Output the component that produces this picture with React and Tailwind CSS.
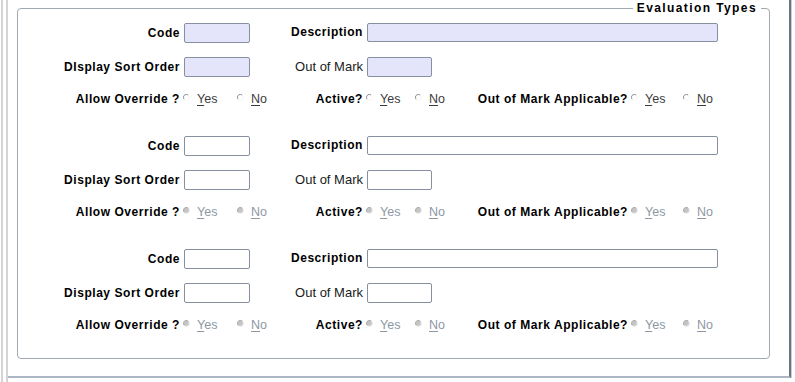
import React from 'react';

const font = { fontFamily: '"Liberation Sans", Arial, sans-serif' };

function RadioDot({ disabled }) {
  // tiny classic 3D radio: sunken arc top-left, light bottom-right
  return (
    <svg width="7" height="7" viewBox="0 0 7 7" className="shrink-0 -translate-y-[2px]">
      <circle cx="3.5" cy="3.5" r="3" fill={disabled ? '#c4c4c4' : '#ffffff'} />
      <path d="M1 5.2 A3 3 0 0 1 5.2 1" fill="none" stroke={disabled ? '#a8a8a8' : '#8c8c8c'} strokeWidth="1" />
      <path d="M5.9 1.8 A3 3 0 0 1 1.8 5.9" fill="none" stroke="#f2f2f2" strokeWidth="1" />
    </svg>
  );
}

function RadioItem({ label, width, pad, disabled }) {
  return (
    <div className={`flex items-center h-full ${width} ${pad}`}>
      <RadioDot disabled={disabled} />
      <span className={`ml-[7px] text-[12.5px] ${disabled ? 'text-[#8d98a4]' : 'text-[#3c3c3c]'}`}>
        <span className="underline underline-offset-2">{label[0]}</span>
        {label.slice(1)}
      </span>
    </div>
  );
}

function TextBox({ width, height, filled }) {
  return (
    <div
      className={`${width} ${height} ml-[4px] rounded-[2px] border border-[#8690a0] ${filled ? 'bg-[#e4e4fa]' : 'bg-white'}`}
    />
  );
}

function Section({ filled, disabled, first }) {
  const bold = 'font-bold text-[12px] tracking-[0.55px] text-black';
  return (
    <div className={`flex flex-col ${first ? '' : 'mt-[27px]'}`}>
      <div className="flex items-center h-[20px]">
        <div className={`w-[162px] text-right ${bold}`}>Code</div>
        <TextBox width="w-[66px]" height="h-[20px]" filled={filled} />
        <div className={`w-[113px] text-right -translate-y-[1px] ${bold}`}>Description</div>
        <div className="-translate-y-[1px]">
          <TextBox width="w-[351px]" height="h-[19px]" filled={filled} />
        </div>
      </div>
      <div className="flex items-center h-[20px] mt-[14px]">
        <div className={`w-[162px] text-right ${bold}`}>{first ? 'DIsplay Sort Order' : 'Display Sort Order'}</div>
        <TextBox width="w-[66px]" height="h-[20px]" filled={filled} />
        <div className="w-[113px] text-right text-[13px] text-[#1a1a1a]">Out of Mark</div>
        <TextBox width="w-[65px]" height="h-[20px]" filled={filled} />
      </div>
      <div className="flex items-center h-[20px] mt-[12px]">
        <div className={`w-[162px] text-right ${bold}`}>Allow Override ?</div>
        <RadioItem label="Yes" width="w-[57px]" pad="pl-[3px]" disabled={disabled} />
        <RadioItem label="No" width="w-[30px]" pad="" disabled={disabled} />
        <div className={`w-[96px] text-right ${bold}`}>Active?</div>
        <RadioItem label="Yes" width="w-[52px]" pad="pl-[3px]" disabled={disabled} />
        <RadioItem label="No" width="w-[30px]" pad="" disabled={disabled} />
        <div className={`w-[183px] text-right ${bold}`}>Out of Mark Applicable?</div>
        <RadioItem label="Yes" width="w-[55px]" pad="pl-[3px]" disabled={disabled} />
        <RadioItem label="No" width="w-[30px]" pad="" disabled={disabled} />
      </div>
    </div>
  );
}

export default function App() {
  return (
    <div className="w-[795px] h-[382px] bg-white flex overflow-hidden" style={font}>
      <div className="w-[1px] shrink-0" />
      <div className="w-[2px] shrink-0 bg-[#d4d4d4]" />
      <div className="w-[3px] shrink-0" />
      <div className="w-[2px] shrink-0 bg-[#d4d4d4]" />
      <div className="w-[783px] h-[378px] shrink-0 border-r-2 border-b-2 border-r-[#6e7380] border-b-[#aeb5c4] pt-[8px] pl-[9px]">
        <div className="relative w-[753px] h-[351px] border border-[#a0a8b2] rounded-[4px] pt-[14px]">
          <div className="absolute -top-[9px] right-[8px] bg-white px-[4px] font-bold text-[12px] tracking-[1.4px] text-black leading-[16px]">
            Evaluation Types
          </div>
          <Section filled first />
          <Section disabled />
          <Section disabled />
        </div>
      </div>
      <div className="w-[1px] h-[378px] shrink-0 bg-[#c8ccd8]" />
    </div>
  );
}
